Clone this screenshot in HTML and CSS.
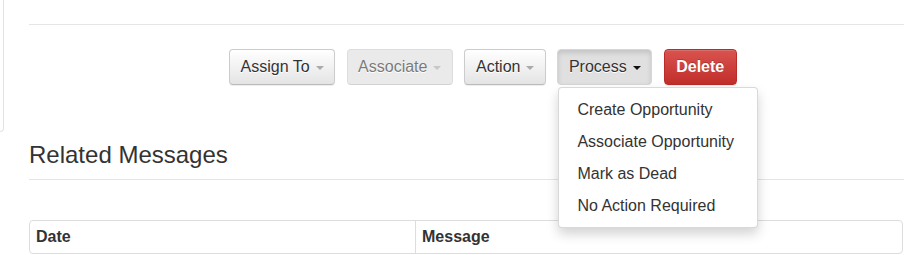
FILE: index.html
```html
<!DOCTYPE html>
<html lang="en">
<head>
<meta charset="UTF-8">
<title>Lead Detail</title>
<link rel="stylesheet" href="styles.css">
</head>
<body>

<div class="page">

<!-- SIDE PANEL EDGE -->
<div class="side"></div>

<!-- MAIN -->
<div class="main">
  <hr class="rule">

  <div class="actions">
    <button class="btn">Assign To<span class="caret"></span></button>
    <button class="btn" disabled>Associate<span class="caret"></span></button>
    <button class="btn">Action<span class="caret"></span></button>
    <div class="dropdown">
      <button class="btn open">Process<span class="caret dark"></span></button>
      <ul class="menu">
        <li><a href="#">Create Opportunity</a></li>
        <li><a href="#">Associate Opportunity</a></li>
        <li><a href="#">Mark as Dead</a></li>
        <li><a href="#">No Action Required</a></li>
      </ul>
    </div>
    <button class="btn danger">Delete</button>
  </div>

  <div class="page-header">
    <h3>Related Messages</h3>
  </div>

  <table class="grid">
    <thead>
      <tr>
        <th class="col-date">Date</th>
        <th>Message</th>
      </tr>
    </thead>
  </table>
</div>

</div>

</body>
</html>
```

FILE: styles.css
```css
/* RESET */
*{
  box-sizing:border-box;
}

body{
  margin:0;
  background:#fff;
  color:#333;
  font-family:"Liberation Sans", Arial, sans-serif;
  font-size:16px;
  line-height:22px;
}

.page{
  display:flex;
  align-items:flex-start;
}

/* SIDE */
.side{
  flex:none;
  width:4px;
  height:132px;
  border-right:1px solid #e3e3e3;
  border-bottom:1px solid #e3e3e3;
  border-bottom-right-radius:4px;
}

/* MAIN */
.main{
  margin-left:25px;
  width:875px;
  padding-top:24px;
}

.rule{
  margin:0;
  border:0;
  border-top:1px solid #e5e5e5;
}

/* BUTTONS */
.actions{
  display:flex;
  gap:11.5px;
  margin-top:24px;
  padding-left:200px;
}

.btn{
  font-family:inherit;
  font-size:16px;
  line-height:22px;
  padding:6px 10.5px;
  color:#333;
  border:1px solid #ccc;
  border-bottom-color:#bbb;
  border-radius:4px;
  background:linear-gradient(to bottom,#fff 0,#e4e4e4 100%);
  text-shadow:0 1px 0 #fff;
  box-shadow:inset 0 1px 0 rgba(255,255,255,.15),0 1px 1px rgba(0,0,0,.075);
  cursor:pointer;
  display:flex;
  align-items:center;
}

.btn:disabled{
  opacity:.65;
  background:#e0e0e0;
  box-shadow:none;
  cursor:default;
}

.btn.open{
  background:#e0e0e0;
  border-color:#d6d6d6;
  box-shadow:inset 0 3px 5px rgba(0,0,0,.125);
}

.btn.danger{
  color:#fff;
  font-weight:bold;
  padding:6px 11.5px;
  background:linear-gradient(to bottom,#d9534f 0,#c12e2a 100%);
  border-color:#b92c28;
  text-shadow:0 -1px 0 rgba(0,0,0,.2);
}

.caret{
  display:inline-block;
  width:0;
  height:0;
  margin-left:6px;
  margin-top:1px;
  border-top:4px solid #aaa;
  border-left:4px solid transparent;
  border-right:4px solid transparent;
}

.caret.dark{
  border-top-color:#111;
}

/* DROPDOWN */
.dropdown{
  position:relative;
}

.menu{
  position:absolute;
  top:100%;
  left:1px;
  margin:2px 0 0;
  padding:6px 0 5px;
  width:200px;
  list-style:none;
  background:#fff;
  border:1px solid rgba(0,0,0,.15);
  border-radius:4px;
  box-shadow:0 6px 12px rgba(0,0,0,.175);
  z-index:10;
}

.menu a{
  display:block;
  padding:5px 18px;
  color:#333;
  text-decoration:none;
  white-space:nowrap;
}

/* HEADER */
.page-header{
  margin-top:57px;
  padding-bottom:11px;
  border-bottom:1px solid #e5e5e5;
}

.page-header h3{
  margin:0;
  font-size:24px;
  font-weight:normal;
  line-height:26px;
}

/* TABLE */
.grid{
  margin-top:40px;
  width:874px;
  border:1px solid #ddd;
  border-radius:4px;
  border-spacing:0;
}

.grid th{
  text-align:left;
  padding:6px 6px;
  line-height:20px;
  font-weight:bold;
}

.grid .col-date{
  width:386px;
  border-right:1px solid #ddd;
}
```
